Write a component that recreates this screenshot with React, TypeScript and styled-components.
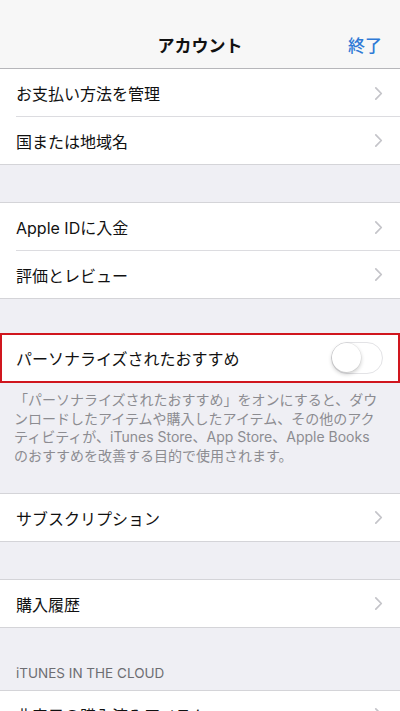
import React from "react";
import styled, { createGlobalStyle } from "styled-components";

const Global = createGlobalStyle`
  html, body { margin: 0; padding: 0; background: #efeff4; }
  body {
    font-family: "Inter", "Noto Sans CJK JP", "Liberation Sans", sans-serif;
    -webkit-font-smoothing: antialiased;
  }
  * { box-sizing: border-box; }
`;

const Screen = styled.div`
  width: 400px;
  height: 711px;
  overflow: hidden;
  background: #efeff4;
  display: flex;
  flex-direction: column;
`;

const NavBar = styled.header`
  height: 69px;
  flex: none;
  padding-top: 20px;
  background: #f7f7f7;
  border-bottom: 1px solid #b6b6ba;
  display: grid;
  grid-template-columns: 1fr auto 1fr;
  align-items: center;
`;

const NavTitle = styled.h1`
  grid-column: 2;
  margin: 0;
  font-size: 17px;
  font-weight: 700;
  color: #111;
  letter-spacing: 0;
`;

const NavButton = styled.button`
  grid-column: 3;
  justify-self: end;
  margin-right: 18px;
  border: none;
  background: none;
  padding: 0;
  font-family: inherit;
  font-size: 17px;
  font-weight: 500;
  color: #2f7ad6;
`;

const Group = styled.section<{ $top?: boolean }>`
  flex: none;
  background: #fff;
  border-top: ${(p) => (p.$top ? "1px solid #d4d4d8" : "none")};
  border-bottom: 1px solid #d4d4d8;
`;

const Row = styled.div<{ $sep?: boolean }>`
  position: relative;
  height: ${(p) => (p.$sep ? 48 : 47)}px;
  display: flex;
  align-items: center;
  justify-content: space-between;
  padding: 0 17px 0 16px;
  font-size: 16px;
  color: #111;
  &::after {
    content: "";
    display: ${(p) => (p.$sep ? "block" : "none")};
    position: absolute;
    left: 16px;
    right: 0;
    bottom: 0;
    height: 1px;
    background: #dcdce0;
  }
`;

const Spacer = styled.div<{ $h: number }>`
  flex: none;
  height: ${(p) => p.$h}px;
`;

const Highlight = styled.div`
  flex: none;
  height: 50px;
  border: 2px solid #d0161e;
  background: #fff;
  display: flex;
  align-items: center;
  justify-content: space-between;
  padding: 0 15px 0 14px;
  font-size: 16px;
  color: #111;
`;

const Toggle = styled.div`
  position: relative;
  width: 52px;
  height: 32px;
  border-radius: 16px;
  border: 1.5px solid #e3e3e6;
  background: #fff;
`;

const Knob = styled.div`
  position: absolute;
  top: 0;
  left: 0;
  width: 29px;
  height: 29px;
  border-radius: 50%;
  background: #fff;
  box-shadow: 0 2px 4px rgba(0, 0, 0, 0.22), 0 0 0 0.5px rgba(0, 0, 0, 0.08);
`;

const Footer = styled.p`
  flex: none;
  margin: 0;
  padding: 8px 14px 28px 14px;
  font-size: 14px;
  line-height: 18.5px;
  color: #8c8c91;
  white-space: nowrap;
`;

const SectionHeader = styled.div`
  flex: none;
  height: 63px;
  padding: 0 16px 9px;
  display: flex;
  align-items: flex-end;
  font-size: 13.5px;
  color: #6d6d72;
  border-bottom: 1px solid #d4d4d8;
`;

const Chevron = () => (
  <svg width="9" height="15" viewBox="0 0 9 15" aria-hidden>
    <path d="M1.8 1.8 L7.3 7.5 L1.8 13.2" fill="none" stroke="#c4c4c9" strokeWidth="1.7" strokeLinecap="round" strokeLinejoin="round" />
  </svg>
);

export default function App() {
  return (
    <>
      <Global />
      <Screen>
        <NavBar>
          <NavTitle>アカウント</NavTitle>
          <NavButton>終了</NavButton>
        </NavBar>

        <Group>
          <Row $sep>
            お支払い方法を管理
            <Chevron />
          </Row>
          <Row>
            国または地域名
            <Chevron />
          </Row>
        </Group>

        <Spacer $h={37} />

        <Group $top>
          <Row $sep>
            Apple IDに入金
            <Chevron />
          </Row>
          <Row>
            評価とレビュー
            <Chevron />
          </Row>
        </Group>

        <Spacer $h={34} />

        <Highlight>
          パーソナライズされたおすすめ
          <Toggle>
            <Knob />
          </Toggle>
        </Highlight>

        <Footer>
          「パーソナライズされたおすすめ」をオンにすると、ダウ
          <br />
          ンロードしたアイテムや購入したアイテム、その他のアク
          <br />
          ティビティが、iTunes Store、App Store、Apple Books
          <br />
          のおすすめを改善する目的で使用されます。
        </Footer>

        <Group $top>
          <Row>
            サブスクリプション
            <Chevron />
          </Row>
        </Group>

        <Spacer $h={37} />

        <Group $top>
          <Row>
            購入履歴
            <Chevron />
          </Row>
        </Group>

        <SectionHeader>iTUNES IN THE CLOUD</SectionHeader>

        <Group>
          <Row>
            非表示の購入済みアイテム
            <Chevron />
          </Row>
        </Group>
      </Screen>
    </>
  );
}
